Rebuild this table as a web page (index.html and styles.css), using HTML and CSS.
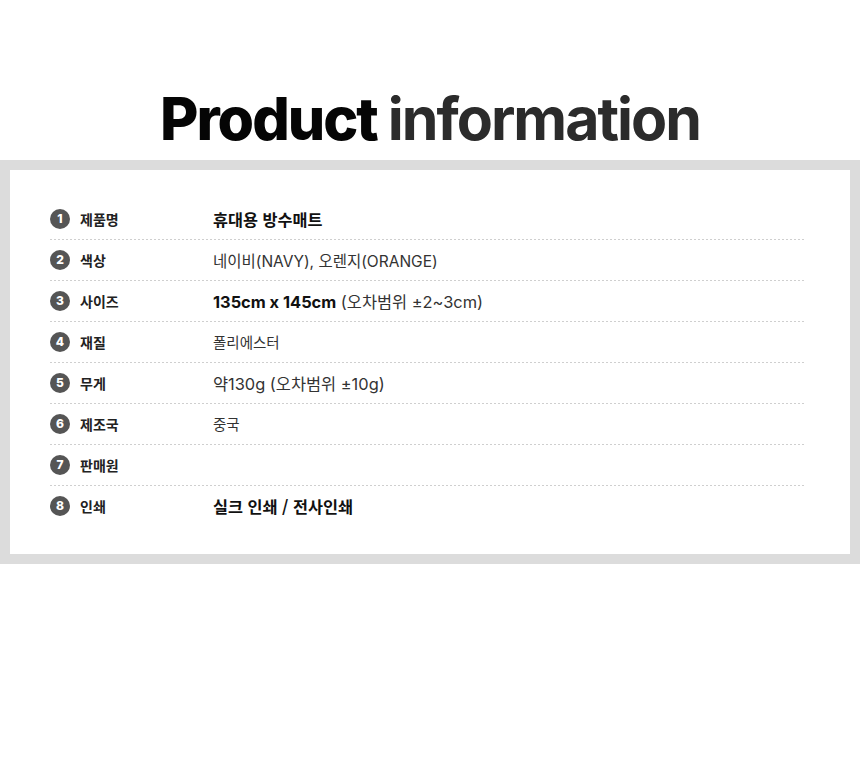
FILE: index.html
```html
<!DOCTYPE html>
<html lang="ko">
<head>
<meta charset="utf-8">
<link rel="stylesheet" href="styles.css">
</head>
<body>
<header class="head">
  <h1 class="title"><span class="t-dark">Product</span> <span class="t-soft">information</span></h1>
</header>
<section class="frame">
  <div class="card">
    <ul class="rows">
      <li class="row"><span class="num">1</span><span class="label">제품명</span><span class="value strong">휴대용 방수매트</span></li>
      <li class="row"><span class="num">2</span><span class="label">색상</span><span class="value">네이비(NAVY), 오렌지(ORANGE)</span></li>
      <li class="row"><span class="num">3</span><span class="label">사이즈</span><span class="value big"><b>135cm x 145cm</b> (오차범위 ±2~3cm)</span></li>
      <li class="row"><span class="num">4</span><span class="label">재질</span><span class="value small">폴리에스터</span></li>
      <li class="row"><span class="num">5</span><span class="label">무게</span><span class="value big">약130g (오차범위 ±10g)</span></li>
      <li class="row"><span class="num">6</span><span class="label">제조국</span><span class="value small">중국</span></li>
      <li class="row"><span class="num">7</span><span class="label">판매원</span><span class="value"></span></li>
      <li class="row"><span class="num">8</span><span class="label">인쇄</span><span class="value strong">실크 인쇄 / 전사인쇄</span></li>
    </ul>
  </div>
</section>
</body>
</html>
```
FILE: styles.css
```css
html, body {
  margin: 0;
  padding: 0;
  background: #fff;
}
body {
  font-family: "Noto Sans CJK KR", "Noto Sans", sans-serif;
  color: #222;
}
.head {
  height: 160px;
  display: flex;
  align-items: flex-start;
  justify-content: center;
}
.title {
  margin: 0;
  padding-top: 84px;
  font-family: Inter, "Noto Sans", sans-serif;
  font-weight: 800;
  font-size: 59px;
  line-height: 70px;
  letter-spacing: -2px;
  white-space: nowrap;
}
.t-dark { color: #050505; }
.t-soft { color: #2b2b2b; font-weight: 700; }
.frame {
  background: #dcdcdc;
  padding: 10px;
}
.card {
  background: #fff;
  height: 384px;
  box-sizing: border-box;
  padding: 29px 46px 0 40px;
}
.rows {
  list-style: none;
  margin: 0;
  padding: 0;
}
.row {
  height: 41px;
  box-sizing: border-box;
  display: flex;
  align-items: center;
  padding-bottom: 2px;
  background-image: repeating-linear-gradient(to right, #cfcfcf 0 2px, transparent 2px 4px);
  background-size: 100% 1px;
  background-repeat: no-repeat;
  background-position: left bottom;
}
.row:last-child { background-image: none; }
.num {
  width: 20px;
  height: 20px;
  border-radius: 50%;
  background: #555;
  color: #fff;
  font-family: Inter, sans-serif;
  font-size: 12px;
  font-weight: 800;
  display: flex;
  align-items: center;
  justify-content: center;
  flex: none;
}
.label {
  width: 133px;
  flex: none;
  margin-left: 10px;
  font-size: 14px;
  font-weight: 700;
  color: #222;
}
.value {
  font-size: 15.5px;
  color: #333;
  font-family: Inter, "Noto Sans CJK KR", sans-serif;
}
.value.strong {
  font-family: "Noto Sans CJK KR", sans-serif;
  font-size: 16.3px;
  font-weight: 700;
  color: #111;
}
.value.big { font-size: 16.4px; }
.value.big b { font-weight: 700; color: #111; }
.value.small { font-size: 14.5px; }
```
